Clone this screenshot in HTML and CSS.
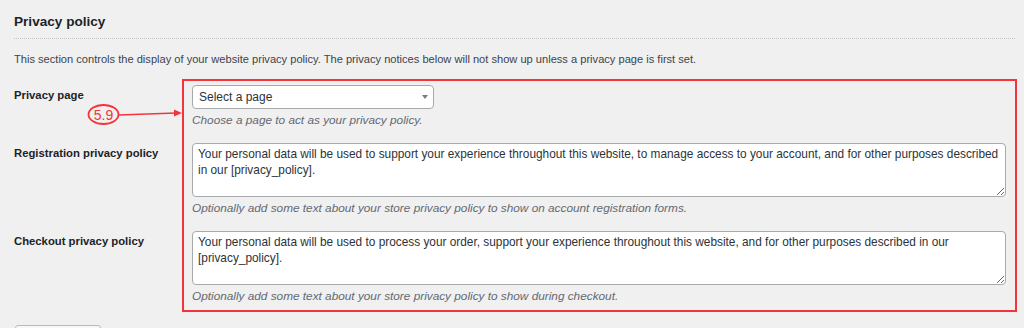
FILE: index.html
```html
<!DOCTYPE html>
<html lang="en">
<head>
    <meta charset="UTF-8">
    <meta name="viewport" content="width=device-width, initial-scale=1.0">
    <title>Privacy policy settings</title>
    <link rel="stylesheet" href="styles.css">
</head>
<body>
    <div class="wrap">
        <h2 class="title">Privacy policy</h2>
        <div class="sep"></div>
        <p class="intro">This section controls the display of your website privacy policy. The privacy notices below will not show up unless a privacy page is first set.</p>

        <div class="form">
            <div class="row">
                <div class="label">Privacy page</div>
                <div class="field">
                    <div class="select">Select a page<span class="caret"></span></div>
                    <p class="help">Choose a page to act as your privacy policy.</p>
                </div>
            </div>

            <div class="row">
                <div class="label">Registration privacy policy</div>
                <div class="field">
                    <textarea class="text" readonly>Your personal data will be used to support your experience throughout this website, to manage access to your account, and for other purposes described in our [privacy_policy].</textarea>
                    <p class="help">Optionally add some text about your store privacy policy to show on account registration forms.</p>
                </div>
            </div>

            <div class="row">
                <div class="label">Checkout privacy policy</div>
                <div class="field">
                    <textarea class="text" readonly>Your personal data will be used to process your order, support your experience throughout this website, and for other purposes described in our [privacy_policy].</textarea>
                    <p class="help">Optionally add some text about your store privacy policy to show during checkout.</p>
                </div>
            </div>

            <!-- annotation overlay -->
            <div class="frame"></div>
            <svg class="callout" width="180" height="60" viewBox="0 0 180 60">
                <ellipse cx="89.5" cy="35.5" rx="15" ry="9.5" fill="none" stroke="#f2353b" stroke-width="1.8"/>
                <text x="89.5" y="40.5" text-anchor="middle" class="callout-num">5.9</text>
                <line x1="104.5" y1="36" x2="162" y2="34" stroke="#f2353b" stroke-width="1.6"/>
                <polygon points="168,34 160,30.5 160,37.5" fill="#f2353b"/>
            </svg>
        </div>

        <!-- only the top edge of the save button is in view -->
        <button class="save" type="button" aria-label="Save changes"></button>
    </div>
</body>
</html>
```

FILE: styles.css
```css
html, body {
    margin: 0;
    padding: 0;
    background-color: #f0f0f1;
    overflow: hidden;
}

body {
    font-family: 'Liberation Sans', Arial, sans-serif;
    color: #1d2327;
    font-size: 11.1px;
}

.wrap {
    padding: 13px 18px 0 14px;
}

.title {
    margin: 0;
    font-size: 13.6px;
    line-height: 18px;
    font-weight: 600;
    color: #1d2327;
}

.sep {
    margin: 7px -9px 0 0;
    border-top: 1px dotted #c3c4c7;
}

.intro {
    margin: 12px 0 0;
    line-height: 16px;
    color: #3c434a;
}

.form {
    position: relative;
    margin-top: 12px;
    padding: 6px 0 8px;
    display: flex;
    flex-direction: column;
    gap: 15px;
}

.row {
    display: grid;
    grid-template-columns: 178px 1fr;
}

.label {
    padding-top: 2px;
    font-size: 11.3px;
    line-height: 16px;
    font-weight: 600;
}

.field {
    display: flex;
    flex-direction: column;
    align-items: flex-start;
}

.select {
    position: relative;
    box-sizing: border-box;
    width: 242px;
    height: 24px;
    padding: 0 24px 0 6px;
    border: 1px solid #a7aaad;
    border-radius: 4px;
    background: #fff;
    font-size: 12px;
    line-height: 22px;
    color: #2c3338;
}

.caret {
    position: absolute;
    right: 5px;
    top: 9px;
    border-left: 3.5px solid transparent;
    border-right: 3.5px solid transparent;
    border-top: 4px solid #787c82;
}

.text {
    box-sizing: border-box;
    width: 100%;
    height: 54px;
    margin: 0;
    padding: 2px 5px;
    border: 1px solid #a7aaad;
    border-radius: 4px;
    background: #fff;
    font-family: 'Liberation Sans', Arial, sans-serif;
    font-size: 11.85px;
    line-height: 16px;
    color: #2c3338;
    resize: vertical;
    outline: none;
}

.help {
    margin: 3px 0 0;
    font-size: 11.8px;
    line-height: 16px;
    font-style: italic;
    color: #646970;
}

.frame {
    position: absolute;
    left: 168px;
    top: 0;
    right: -11px;
    bottom: 0;
    border: 2px solid #f2353b;
    pointer-events: none;
}

.callout {
    position: absolute;
    left: 0;
    top: 0;
    overflow: visible;
}

.callout-num {
    font-family: 'Liberation Sans', Arial, sans-serif;
    font-size: 14px;
    fill: #f2353b;
}

.save {
    display: block;
    margin-top: 13px;
    margin-left: 1px;
    width: 86px;
    height: 30px;
    border: 1px solid #9ec2d9;
    border-radius: 3px;
    background: #f6f7f7;
}
```
